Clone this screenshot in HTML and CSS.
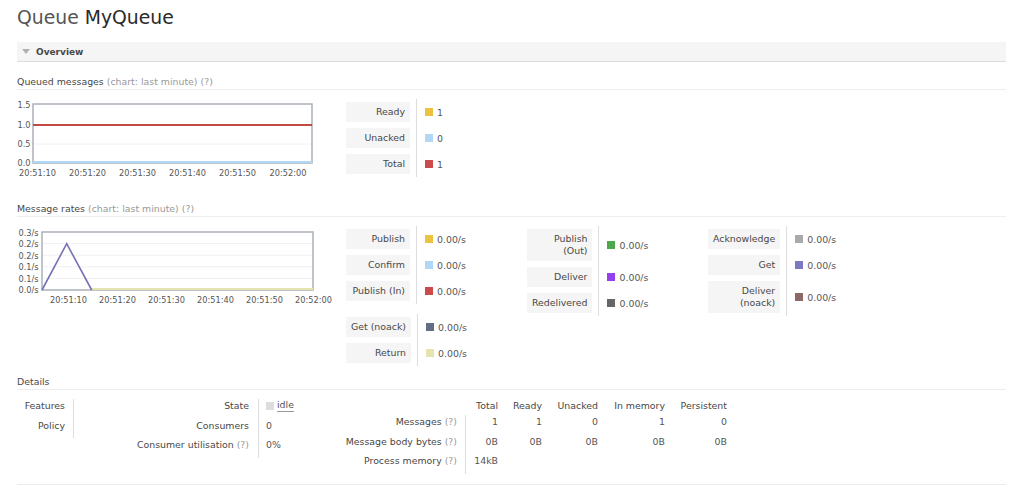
FILE: index.html
```html
<!DOCTYPE html>
<html>
<head>
<meta charset="utf-8">
<link rel="stylesheet" href="styles.css">
</head>
<body>
<div class="page">
  <h1><span class="h1-pre">Queue</span> <span class="h1-name">MyQueue</span></h1>
  <div class="section">
    <div class="section-head"><span class="tri"></span>Overview</div>
    <div class="section-body">
      <h3 class="sub sub-first">Queued messages <span class="muted">(chart: last minute) (?)</span></h3>
      <div class="chart-row">
        <svg class="chart" viewBox="0 0 300 80" width="300" height="80">
          <line class="grid" x1="16" y1="45" x2="295" y2="45"/>
          <rect class="frame" x="16" y="5" width="279" height="59"/>
          <line x1="16" y1="26" x2="295" y2="26" stroke="#c24a43" stroke-width="2"/>
          <line x1="16" y1="63" x2="295" y2="63" stroke="#afd8f8" stroke-width="2"/>
          <text class="yl" x="13.5" y="6">1.5</text>
          <text class="yl" x="13.5" y="26">1.0</text>
          <text class="yl" x="13.5" y="45.5">0.5</text>
          <text class="yl" x="13.5" y="64">0.0</text>
          <text class="xl" x="20.5" y="74">20:51:10</text>
          <text class="xl" x="70.5" y="74">20:51:20</text>
          <text class="xl" x="120.5" y="74">20:51:30</text>
          <text class="xl" x="170.5" y="74">20:51:40</text>
          <text class="xl" x="220.5" y="74">20:51:50</text>
          <text class="xl" x="271" y="74">20:52:00</text>
        </svg>
        <div class="legend">
          <div class="lg-lbl"><span>Ready</span></div>
          <div class="lg-val"><i class="sw" style="background:#edc240"></i>1</div>
          <div class="lg-lbl"><span>Unacked</span></div>
          <div class="lg-val"><i class="sw" style="background:#afd8f8"></i>0</div>
          <div class="lg-lbl"><span>Total</span></div>
          <div class="lg-val"><i class="sw" style="background:#cb4b4b"></i>1</div>
        </div>
      </div>

      <h3 class="sub sub-rates">Message rates <span class="muted">(chart: last minute) (?)</span></h3>
      <div class="chart-row">
        <svg class="chart" viewBox="0 0 300 80" width="300" height="80">
          <line class="grid" x1="25" y1="17.6" x2="296" y2="17.6"/>
          <line class="grid" x1="25" y1="29.2" x2="296" y2="29.2"/>
          <line class="grid" x1="25" y1="40.8" x2="296" y2="40.8"/>
          <line class="grid" x1="25" y1="52.4" x2="296" y2="52.4"/>
          <rect class="frame" x="25" y="6" width="271" height="58"/>
          <line x1="74.7" y1="63" x2="296" y2="63" stroke="#e5e4ae" stroke-width="2"/>
          <polyline points="25,64 49.7,17.7 74.7,64" fill="none" stroke="#7572b5" stroke-width="1.6"/>
          <text class="yl" x="21.5" y="7">0.3/s</text>
          <text class="yl" x="21.5" y="18.6">0.2/s</text>
          <text class="yl" x="21.5" y="30.2">0.2/s</text>
          <text class="yl" x="21.5" y="41.8">0.1/s</text>
          <text class="yl" x="21.5" y="53.4">0.1/s</text>
          <text class="yl" x="21.5" y="64">0.0/s</text>
          <text class="xl" x="51.5" y="74">20:51:10</text>
          <text class="xl" x="100.5" y="74">20:51:20</text>
          <text class="xl" x="149.5" y="74">20:51:30</text>
          <text class="xl" x="198.5" y="74">20:51:40</text>
          <text class="xl" x="247.5" y="74">20:51:50</text>
          <text class="xl" x="296.5" y="74">20:52:00</text>
        </svg>
        <div class="rates-cols">
          <div class="rcol">
            <div class="legend">
              <div class="lg-lbl"><span>Publish</span></div>
              <div class="lg-val"><i class="sw" style="background:#edc240"></i>0.00/s</div>
              <div class="lg-lbl"><span>Confirm</span></div>
              <div class="lg-val"><i class="sw" style="background:#afd8f8"></i>0.00/s</div>
              <div class="lg-lbl"><span>Publish (In)</span></div>
              <div class="lg-val"><i class="sw" style="background:#cb4b4b"></i>0.00/s</div>
            </div>
            <div class="legend legend-2">
              <div class="lg-lbl"><span>Get (noack)</span></div>
              <div class="lg-val"><i class="sw" style="background:#5f7080"></i>0.00/s</div>
              <div class="lg-lbl"><span>Return</span></div>
              <div class="lg-val"><i class="sw" style="background:#e5e4ae"></i>0.00/s</div>
            </div>
          </div>
          <div class="rcol">
            <div class="legend">
              <div class="lg-lbl"><span>Publish<br>(Out)</span></div>
              <div class="lg-val"><i class="sw" style="background:#4da74d"></i>0.00/s</div>
              <div class="lg-lbl"><span>Deliver</span></div>
              <div class="lg-val"><i class="sw" style="background:#9440ed"></i>0.00/s</div>
              <div class="lg-lbl"><span>Redelivered</span></div>
              <div class="lg-val"><i class="sw" style="background:#666666"></i>0.00/s</div>
            </div>
          </div>
          <div class="rcol">
            <div class="legend">
              <div class="lg-lbl"><span>Acknowledge</span></div>
              <div class="lg-val"><i class="sw" style="background:#aaaaaa"></i>0.00/s</div>
              <div class="lg-lbl"><span>Get</span></div>
              <div class="lg-val"><i class="sw" style="background:#7c79c3"></i>0.00/s</div>
              <div class="lg-lbl"><span>Deliver<br>(noack)</span></div>
              <div class="lg-val"><i class="sw" style="background:#8e6767"></i>0.00/s</div>
            </div>
          </div>
        </div>
      </div>

      <h3 class="sub sub-details">Details</h3>
      <div class="details">
        <div class="dt dt1">
          <div class="dl">Features</div><div class="dv"></div>
          <div class="dl">Policy</div><div class="dv"></div>
        </div>
        <div class="dt dt2">
          <div class="dl">State</div><div class="dv"><i class="sw" style="background:#dddddd"></i><span class="idle">idle</span></div>
          <div class="dl">Consumers</div><div class="dv">0</div>
          <div class="dl">Consumer utilisation <span class="muted">(?)</span></div><div class="dv">0%</div>
        </div>
        <div class="dt dt3">
          <div class="th"></div><div class="th">Total</div><div class="th">Ready</div><div class="th">Unacked</div><div class="th">In memory</div><div class="th">Persistent</div>
          <div class="dl">Messages <span class="muted">(?)</span></div><div class="dn first">1</div><div class="dn">1</div><div class="dn">0</div><div class="dn">1</div><div class="dn">0</div>
          <div class="dl">Message body bytes <span class="muted">(?)</span></div><div class="dn first">0B</div><div class="dn">0B</div><div class="dn">0B</div><div class="dn">0B</div><div class="dn">0B</div>
          <div class="dl">Process memory <span class="muted">(?)</span></div><div class="dn first">14kB</div><div class="dn"></div><div class="dn"></div><div class="dn"></div><div class="dn"></div>
        </div>
      </div>
    </div>
  </div>
</div>
</body>
</html>
```

FILE: styles.css
```css
* { box-sizing: border-box; }
body {
  margin: 0;
  font-family: "DejaVu Sans", Verdana, sans-serif;
  font-size: 9.4px;
  color: #484848;
  background: #fff;
}
.page { padding: 0 18px 0 17px; }
h1 {
  margin: 7px 0 13px;
  font-size: 18.8px;
  line-height: 22px;
  font-weight: normal;
  color: #555;
}
.h1-name { color: #2a2a2a; }
.section-head {
  height: 20px;
  background: #f5f5f5;
  border-bottom: 1px solid #dcdcdc;
  font-weight: bold;
  font-size: 9px;
  color: #484848;
  padding-left: 5px;
  display: flex;
  align-items: center;
}
.tri {
  width: 0; height: 0;
  border-left: 4px solid transparent;
  border-right: 4px solid transparent;
  border-top: 5px solid #b0b0b0;
  margin-right: 6px;
}
.section-body {
  border-bottom: 1px solid #ececec;
  padding-bottom: 10px;
}
.sub {
  margin: 0;
  font-size: 9.4px;
  font-weight: normal;
  line-height: 12px;
  padding-bottom: 1px;
  border-bottom: 1px solid #eeeeee;
}
.sub-first { margin-top: 14px; }
.sub-rates { margin-top: 24px; }
.sub-details { margin-top: 10px; }
.muted { color: #999; }
.chart-row {
  display: flex;
  align-items: flex-start;
  margin-top: 9px;
}
.chart {
  flex: none;
  width: 300px;
  height: 80px;
  margin-right: 29px;
  display: block;
  overflow: visible;
}
.chart .frame { fill: none; stroke: #a9b1b9; stroke-width: 1.5; }
.chart .grid { stroke: #f0f0f0; stroke-width: 1; }
.chart text {
  font-family: "DejaVu Sans", Verdana, sans-serif;
  font-size: 8.2px;
  fill: #555;
  dominant-baseline: middle;
}
.chart .yl { text-anchor: end; }
.chart .xl { text-anchor: middle; }
.legend {
  display: grid;
  grid-template-columns: auto auto;
  justify-content: start;
}
.legend-2 { margin-top: 10px; }
.lg-lbl { padding: 3px 6px 3px 0; }
.lg-lbl span {
  display: block;
  background: #f5f5f5;
  padding: 4px 5px;
  line-height: 12px;
  min-width: 64px;
  text-align: right;
}
.lg-val {
  border-left: 1px solid #dddddd;
  padding-left: 8px;
  display: flex;
  align-items: center;
  white-space: nowrap;
  color: #555;
}
.sw {
  display: inline-block;
  width: 8px;
  height: 8px;
  margin-right: 4px;
  flex: none;
}
.rates-cols { display: flex; }
.rcol { width: 181px; }
.details {
  display: flex;
  align-items: flex-start;
  margin-top: 9px;
  padding-left: 7px;
}
.dt { display: grid; }
.dt1 { grid-template-columns: 49px 9px; }
.dt2 { grid-template-columns: 176px 82px; }
.dt3 { grid-template-columns: 125px 33px 44px 56px 67px 62px; }
.dl, .dv, .dn, .th {
  height: 19.5px;
  line-height: 14px;
  white-space: nowrap;
}
.dl { text-align: right; padding-right: 8px; }
.dt2 .dl { padding-right: 9px; }
.dv {
  border-left: 1px solid #dddddd;
  padding-left: 7px;
  display: flex;
  align-items: flex-start;
  color: #555;
}
.dv .sw { margin-top: 3px; margin-right: 3px; }
.idle { border-bottom: 1px solid #999; line-height: 12px; }
.th { height: 16px; text-align: right; }
.dn { text-align: right; color: #555; }
.dn.first { border-left: 1px solid #dddddd; }
```
